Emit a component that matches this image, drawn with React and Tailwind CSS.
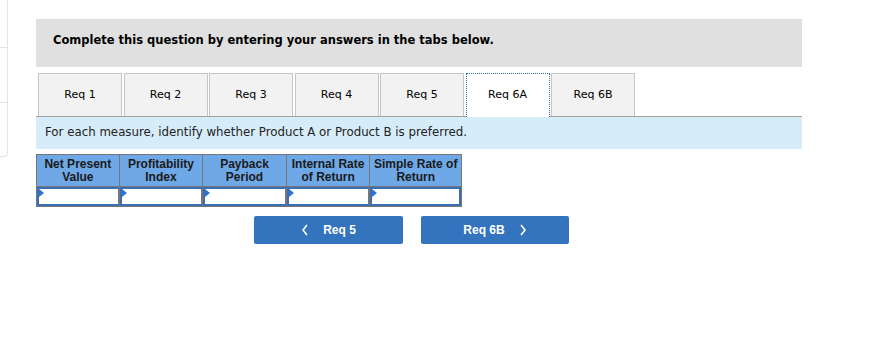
import React from "react";

const V = { fontFamily: '"DejaVu Sans", Verdana, sans-serif' };
const A = { fontFamily: '"Liberation Sans", Arial, sans-serif' };

const tabs = ["Req 1", "Req 2", "Req 3", "Req 4", "Req 5", "Req 6A", "Req 6B"];
const cols = [
  ["Net Present", "Value", "w-[83px]"],
  ["Profitability", "Index", "w-[84px]"],
  ["Payback", "Period", "w-[84px]"],
  ["Internal Rate", "of Return", "w-[84px]"],
  ["Simple Rate of", "Return", "w-[91px]"],
];

export default function App() {
  return (
    <div className="relative w-[880px] h-[346px] bg-white overflow-hidden">
      {/* faint side panel */}
      <div className="absolute left-0 top-[-2px] w-[8px] h-[159px] border border-l-0 border-[#e4e4e4] rounded-br-[4px] flex flex-col">
        <div className="h-[49px] border-b border-[#e4e4e4]" />
        <div className="h-[55px] border-b border-[#e4e4e4]" />
      </div>

      <div className="ml-[36px] pt-[19px] w-[766px]">
        <div className="h-[48px] bg-[#e0e0e0] pl-[17px] pt-[13px] text-[11.5px] font-bold text-black" style={V}>
          Complete this question by entering your answers in the tabs below.
        </div>

        <div className="mt-[6px] flex gap-[1.5px] pl-[2px] border-b border-[#a0a0a0] h-[44px]">
          {tabs.map((t) =>
            t === "Req 6A" ? (
              <div
                key={t}
                className="w-[84px] h-[44px] bg-white border border-dotted border-[#2b6bc4] border-b-0 flex items-center justify-center text-[11px] text-black relative z-10"
                style={V}
              >
                {t}
              </div>
            ) : (
              <div
                key={t}
                className="w-[84px] h-[43px] bg-[#f2f2f2] border border-[#c6c6c6] border-b-0 flex items-center justify-center text-[11px] text-black"
                style={V}
              >
                {t}
              </div>
            )
          )}
        </div>

        <div className="h-[32px] bg-[#d7ecf9] pl-[9px] flex items-center text-[11.8px] text-[#222]" style={V}>
          For each measure, identify whether Product A or Product B is preferred.
        </div>

        <div className="mt-[5px] w-[426px] border border-[#777]">
          <div className="flex h-[31px] bg-[#6fa8e6]">
            {cols.map(([a, b, w], i) => (
              <div
                key={a}
                className={`${w} flex flex-col items-center justify-center text-[12px] leading-[13px] font-bold text-[#1a1a1a] ${i < 4 ? "border-r border-[#777]" : ""}`}
                style={A}
              >
                <span>{a}</span>
                <span>{b}</span>
              </div>
            ))}
          </div>
          <div className="flex h-[20px] border-t border-[#777]">
            {cols.map(([a, b, w], i) => (
              <div
                key={a}
                className={`${w} relative bg-white border-2 border-[#3a6fb5] ${i < 4 ? "border-r-[#777]" : ""}`}
              >
                <div className="absolute left-0 top-0 w-0 h-0 border-t-[4px] border-b-[4px] border-l-[5px] border-t-transparent border-b-transparent border-l-[#2f73d0]" />
              </div>
            ))}
          </div>
        </div>

        <div className="mt-[9px] ml-[218px] flex gap-[18px]">
          <button
            className="w-[149px] h-[28px] rounded-[2px] bg-[#3473bd] text-white text-[12px] font-bold flex items-center justify-center gap-[14px]"
            style={A}
          >
            <svg width="8" height="12" viewBox="0 0 8 12" fill="none" stroke="white" strokeWidth="1.6">
              <path d="M6 1L2 6l4 5" />
            </svg>
            <span>Req 5</span>
          </button>
          <button
            className="w-[148px] h-[28px] rounded-[2px] bg-[#3473bd] text-white text-[12px] font-bold flex items-center justify-center gap-[14px]"
            style={A}
          >
            <span>Req 6B</span>
            <svg width="8" height="12" viewBox="0 0 8 12" fill="none" stroke="white" strokeWidth="1.6">
              <path d="M2 1l4 5-4 5" />
            </svg>
          </button>
        </div>
      </div>
    </div>
  );
}
